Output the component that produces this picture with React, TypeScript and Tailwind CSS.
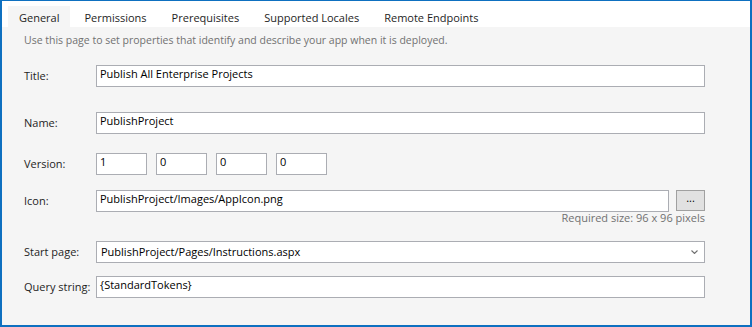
import React from 'react';

const font = { fontFamily: '"Segoe UI", "Open Sans", "Noto Sans", sans-serif' };

const tabs = ['General', 'Permissions', 'Prerequisites', 'Supported Locales', 'Remote Endpoints'];

const TextBox: React.FC<{ value: string; className?: string }> = ({ value, className = '' }) => (
  <div
    className={`h-[22px] border border-[#abadb3] bg-white pl-[3px] text-[11px] leading-[16px] text-black ${className}`}
  >
    {value}
  </div>
);

const Label: React.FC<{ text: string }> = ({ text }) => (
  <div className="w-[72px] shrink-0 text-[11px] text-[#1e1e1e]">{text}</div>
);

const App: React.FC = () => {
  return (
    <div
      className="flex h-[327px] w-[752px] flex-col border-x-2 border-b-2 border-t border-[#0e70c0] bg-white"
      style={font}
    >
      {/* tab strip */}
      <div className="flex h-[26px] items-end bg-white pl-[6px]">
        {tabs.map((t, i) => (
          <div
            key={t}
            className={`flex h-[21px] items-center px-[11px] pt-[3px] text-[11px] text-[#1e1e1e] ${
              i === 0 ? 'bg-[#f5f5f5]' : ''
            } ${i > 0 ? 'ml-[3px]' : ''}`}
          >
            {t}
          </div>
        ))}
      </div>

      <div className="flex flex-1 flex-col bg-[#f5f5f5] pl-[22px] pr-[45px]">
        <p className="mt-[6px] text-[10.5px] text-[#717171]">
          Use this page to set properties that identify and describe your app when it is deployed.
        </p>

        <div className="mt-[16px] flex items-center">
          <Label text="Title:" />
          <TextBox value="Publish All Enterprise Projects" className="flex-1" />
        </div>

        <div className="mt-[25px] flex items-center">
          <Label text="Name:" />
          <TextBox value="PublishProject" className="flex-1" />
        </div>

        <div className="mt-[19px] flex items-center">
          <Label text="Version:" />
          <div className="flex gap-[9px]">
            {['1', '0', '0', '0'].map((v, i) => (
              <TextBox key={i} value={v} className="w-[51px]" />
            ))}
          </div>
        </div>

        <div className="mt-[15px] flex items-center">
          <Label text="Icon:" />
          <TextBox value="PublishProject/Images/AppIcon.png" className="flex-1" />
          <button className="ml-[7px] flex h-[21px] w-[29px] items-center justify-center self-start border border-[#a0a0a0] bg-[#e1e1e1] pb-[4px] text-[11px] text-black">
            ...
          </button>
        </div>
        <div className="mt-[-1px] text-right text-[11px] leading-[14px] text-[#717171]">
          Required size: 96 x 96 pixels
        </div>

        <div className="mt-[16px] flex items-center">
          <Label text="Start page:" />
          <div className="flex h-[22px] flex-1 items-center justify-between border border-[#abadb3] bg-white pl-[4px] pr-[6px] text-[11px] text-black">
            <span>PublishProject/Pages/Instructions.aspx</span>
            <svg width="7" height="4" viewBox="0 0 7 4" fill="none" stroke="#707070" strokeWidth="1.1">
              <path d="M0.5 0.5 L3.5 3.5 L6.5 0.5" />
            </svg>
          </div>
        </div>

        <div className="mt-[13px] flex items-center">
          <Label text="Query string:" />
          <TextBox value="{StandardTokens}" className="flex-1" />
        </div>
      </div>
    </div>
  );
};

export default App;
